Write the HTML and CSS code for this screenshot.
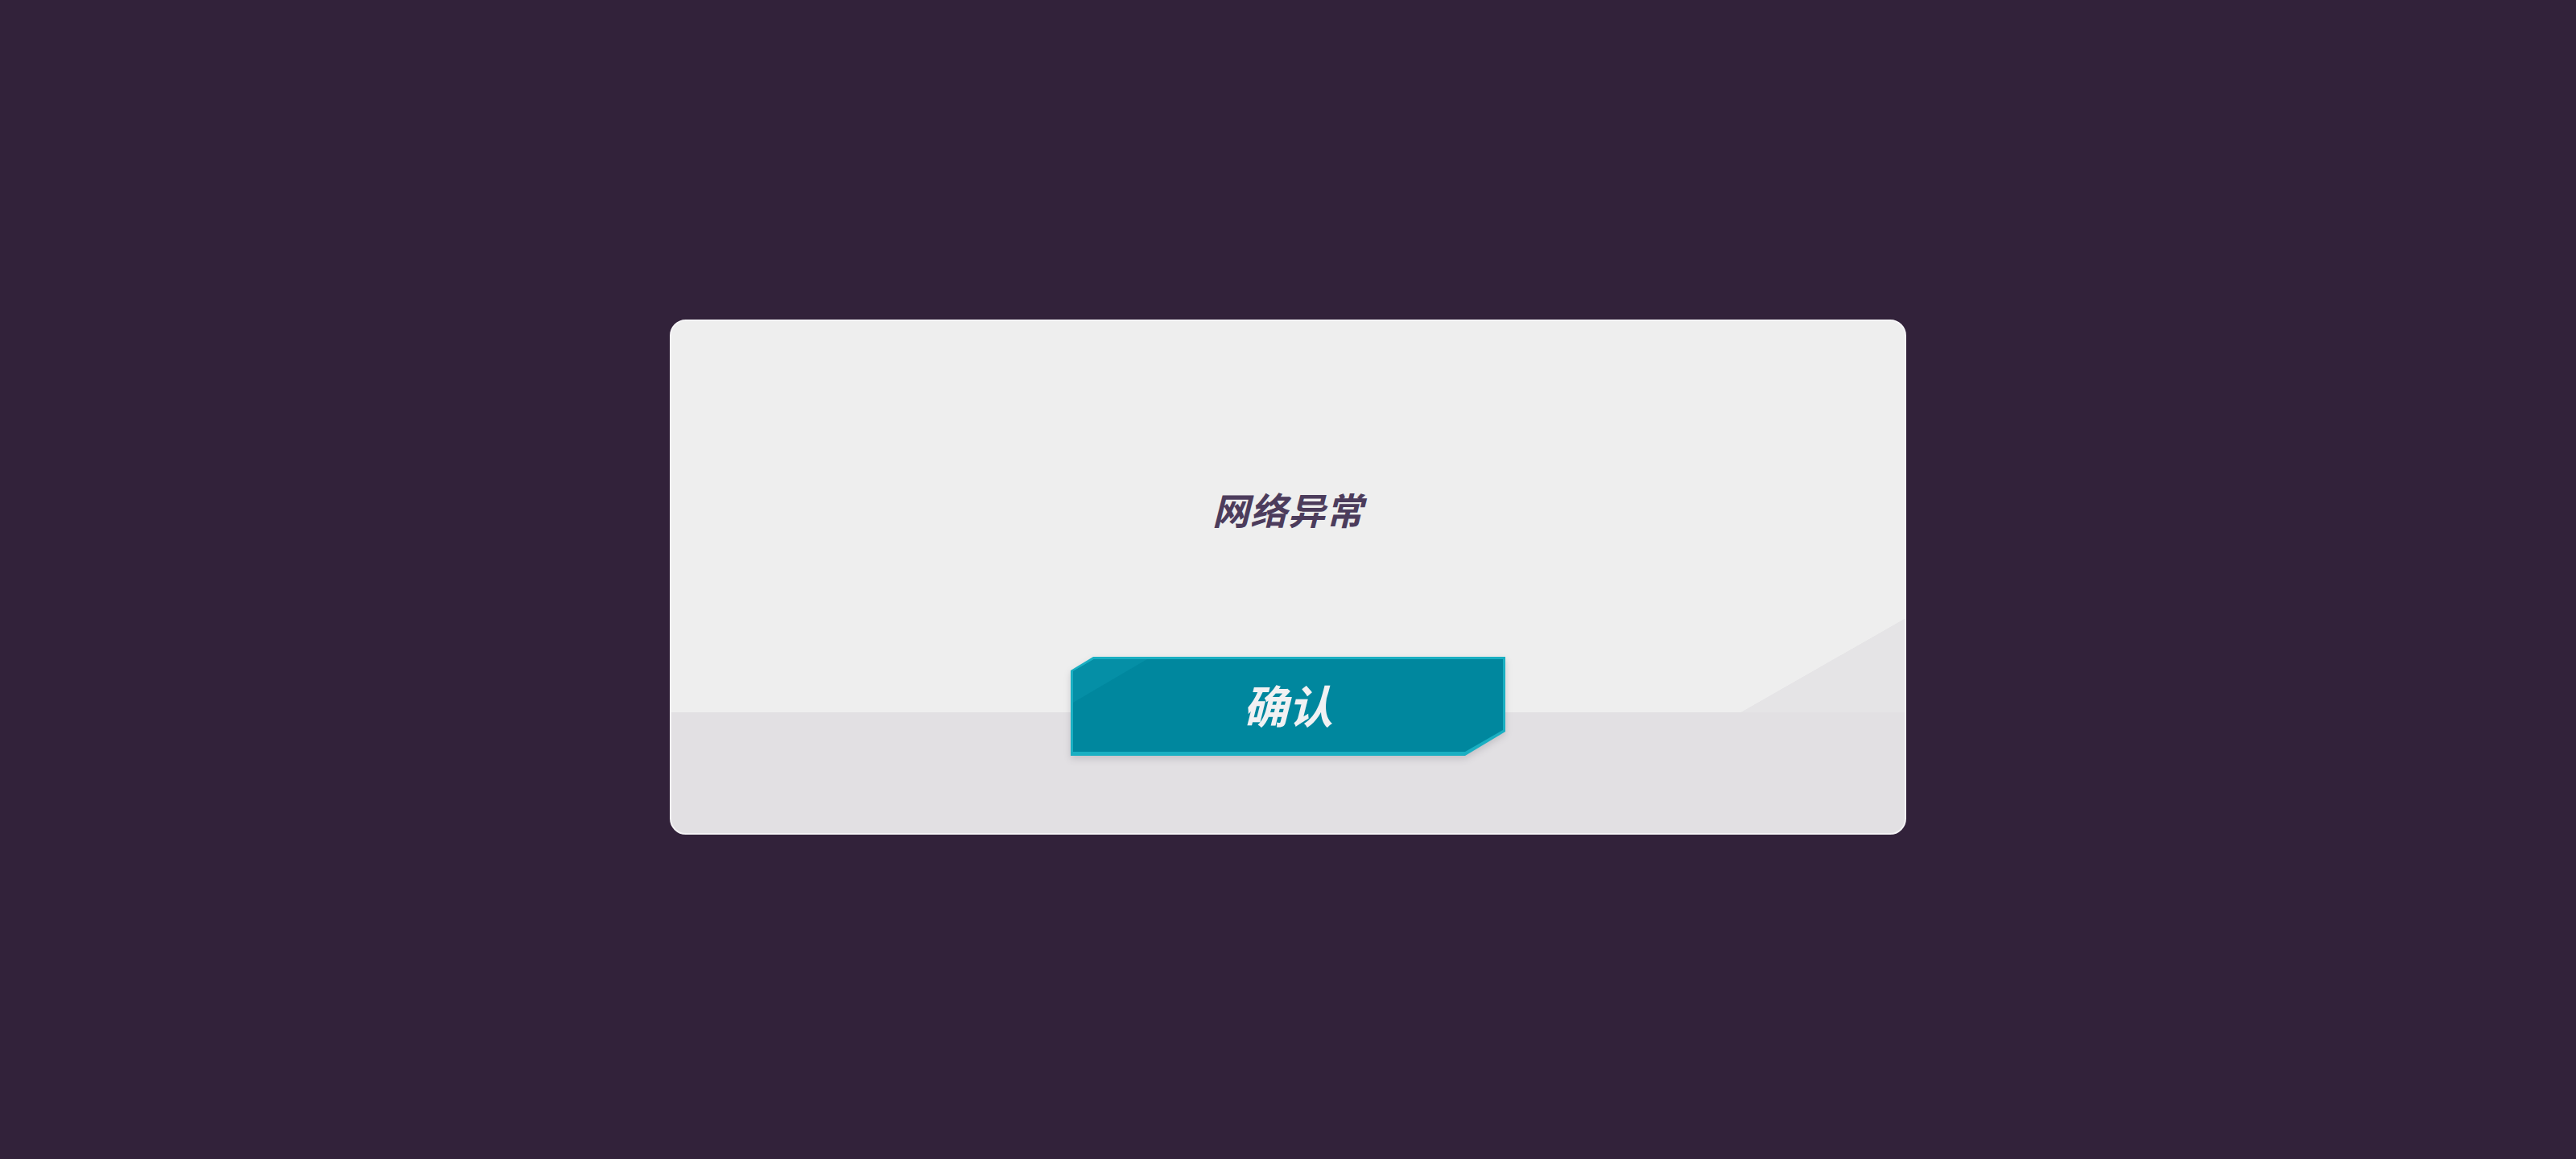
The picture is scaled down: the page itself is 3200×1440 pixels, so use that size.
FILE: index.html
```html
<!DOCTYPE html>
<html lang="zh-CN">
<head>
<meta charset="utf-8">
<title>网络异常</title>
<link rel="stylesheet" href="styles.css">
</head>
<body>
<main class="stage">
  <section class="dialog">
    <p class="message">网络异常</p>
    <div class="btn-wrap">
      <button class="btn" type="button"><span class="btn-face">确认</span></button>
    </div>
  </section>
</main>
</body>
</html>
```

FILE: styles.css
```css
* { box-sizing: border-box; }

html, body {
  margin: 0;
  padding: 0;
  height: 100%;
}

body {
  background: #32223a;
  font-family: "Noto Sans CJK SC", "Noto Sans", sans-serif;
}

.stage {
  height: 100%;
  display: flex;
  align-items: center;
  justify-content: center;
  padding-bottom: 6px;
}

.dialog {
  position: relative;
  width: 1536px;
  height: 640px;
  border: 2px solid #f5f4f6;
  border-radius: 20px;
  background: #eeeeee;
  display: flex;
  flex-direction: column;
  align-items: center;
  padding-top: 203px;
  overflow: hidden;
}

.dialog::before {
  content: "";
  position: absolute;
  inset: 0;
  background: #e2e0e3;
  clip-path: polygon(0 486px, 1329px 486px, 100% 370px, 100% 100%, 0 100%);
}

.dialog::after {
  content: "";
  position: absolute;
  inset: 0;
  background: #e5e4e6;
  clip-path: polygon(1329px 486px, 100% 370px, 100% 486px);
}

.message {
  position: relative;
  z-index: 1;
  margin: 0;
  font-size: 46px;
  line-height: 60px;
  font-weight: 700;
  font-style: italic;
  color: #4c3c5c;
  letter-spacing: 1px;
}

.btn-wrap {
  position: relative;
  z-index: 1;
  margin-top: 154px;
  filter: drop-shadow(0 4px 4px rgba(40, 30, 50, 0.16));
}

.btn {
  display: block;
  width: 540px;
  height: 123px;
  margin: 0;
  padding: 3px 3px 5px 3px;
  border: 0;
  background: #1aafc2;
  clip-path: polygon(28px 0, 100% 0, 100% 93px, 490px 100%, 0 100%, 0 17px);
  cursor: pointer;
}

.btn-face {
  position: relative;
  display: flex;
  align-items: center;
  justify-content: center;
  width: 100%;
  height: 100%;
  background: #00879e;
  clip-path: polygon(26px 0, 100% 0, 100% 88px, 487px 100%, 0 100%, 0 15px);
  font-family: "Noto Sans CJK SC", "Noto Sans", sans-serif;
  font-size: 56px;
  font-weight: 700;
  font-style: italic;
  color: #f1f1f3;
  line-height: 1;
  padding-bottom: 4px;
}

.btn-face::before {
  content: "";
  position: absolute;
  inset: 0;
  background: #058fa6;
  clip-path: polygon(26px 0, 92px 0, 0 54px, 0 15px);
}
```
